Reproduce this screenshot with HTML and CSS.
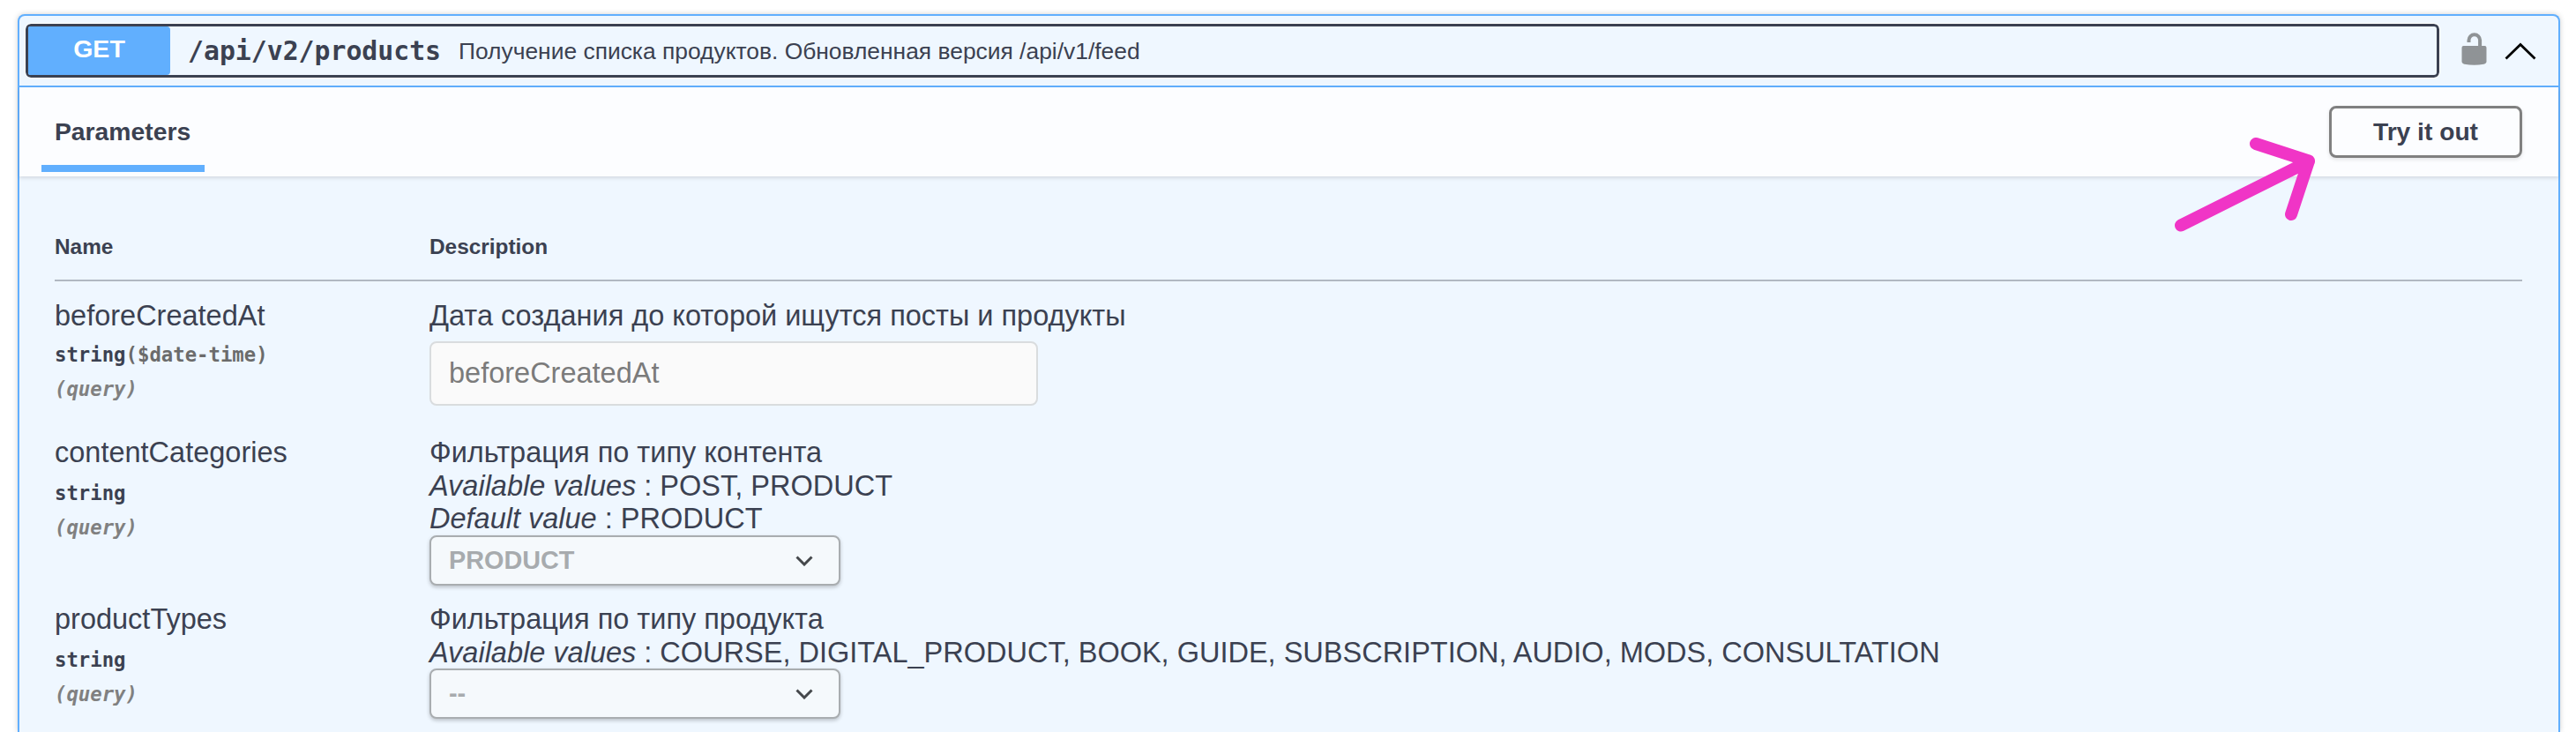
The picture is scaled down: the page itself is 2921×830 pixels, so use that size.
FILE: index.html
```html
<!DOCTYPE html>
<html lang="ru">

<head>
    <meta charset="UTF-8">
    <meta name="viewport" content="width=device-width, initial-scale=1.0">
    <title>GET /api/v2/products</title>
    <link rel="stylesheet" href="styles.css">
</head>

<body>
    <div class="opblock">
        <div class="summary">
            <button class="summary-control">
                <span class="method">GET</span>
                <span class="path">/api/v2/products</span>
                <span class="summary-text">Получение списка продуктов. Обновленная версия /api/v1/feed</span>
            </button>
            <svg class="lock" viewBox="0 0 29 37">
                <path d="M8.500 11V8.500a6.300 6.300 0 0 1 12.600 0V17" fill="none" stroke="#8f9396" stroke-width="4"/>
                <path d="M2.500 15h24q2 0 2 2v15.500q0 2.500-3 3.200q-11 2-22 0q-3-.7-3-3.200V17q0-2 2-2z" fill="#8f9396"/>
            </svg>
            <svg class="arrow-up" viewBox="0 0 36 20">
                <path d="M1.500 18.500L18 2.500l16.500 16" fill="none" stroke="#000" stroke-width="2.800"/>
            </svg>
        </div>

        <div class="section-header">
            <h4 class="tab">Parameters</h4>
            <button class="try-out">Try it out</button>
        </div>

        <div class="parameters">
            <div class="row head">
                <div>Name</div>
                <div>Description</div>
            </div>
            <div class="row first">
                <div>
                    <div class="name">beforeCreatedAt</div>
                    <div class="type">string<span class="format">($date-time)</span></div>
                    <div class="in">(query)</div>
                </div>
                <div>
                    <p>Дата создания до которой ищутся посты и продукты</p>
                    <input type="text" placeholder="beforeCreatedAt" disabled>
                </div>
            </div>
            <div class="row second">
                <div>
                    <div class="name">contentCategories</div>
                    <div class="type">string</div>
                    <div class="in">(query)</div>
                </div>
                <div>
                    <p>Фильтрация по типу контента</p>
                    <p><i>Available values</i> : POST, PRODUCT</p>
                    <p><i>Default value</i> : PRODUCT</p>
                    <div class="select">
                        <span>PRODUCT</span>
                        <svg viewBox="0 0 20 12"><path d="M1.500 1.500l8.500 8.500 8.500-8.500" fill="none" stroke="#45484b" stroke-width="3"/></svg>
                    </div>
                </div>
            </div>
            <div class="row">
                <div>
                    <div class="name">productTypes</div>
                    <div class="type">string</div>
                    <div class="in">(query)</div>
                </div>
                <div>
                    <p>Фильтрация по типу продукта</p>
                    <p><i>Available values</i> : COURSE, DIGITAL_PRODUCT, BOOK, GUIDE, SUBSCRIPTION, AUDIO, MODS, CONSULTATION</p>
                    <div class="select">
                        <span>--</span>
                        <svg viewBox="0 0 20 12"><path d="M1.500 1.500l8.500 8.500 8.500-8.500" fill="none" stroke="#45484b" stroke-width="3"/></svg>
                    </div>
                </div>
            </div>
        </div>
    </div>

    <!-- pointer to the button -->
    <svg class="pointer" viewBox="0 0 160 108">
        <path d="M7 99.500L152 27M92 7l60 19.500L132 87" fill="none" stroke="#f035c6" stroke-width="14" stroke-linecap="round" stroke-linejoin="round"/>
    </svg>
</body>
</html>
```
FILE: styles.css
```css
* {
    box-sizing: border-box;
}

body {
    margin: 0;
    padding: 16px 18px 0 20px;
    height: 830px;
    background: #fff;
    color: #3b4151;
    font-family: "Liberation Sans", Arial, sans-serif;
}

.opblock {
    height: 814px;
    border: 2px solid #61affe;
    border-bottom: 0;
    border-radius: 8px 8px 0 0;
    background: #eff7ff;
    box-shadow: 0 0 6px rgba(0, 0, 0, 0.19);
}

.summary {
    display: flex;
    align-items: center;
    height: 81px;
    padding: 0 25px 0 7px;
    border-bottom: 2px solid #61affe;
}

.summary-control {
    display: flex;
    align-items: center;
    width: 2738px;
    height: 61px;
    padding: 0;
    border: 3px solid #3b4151;
    border-radius: 6px;
    outline: 1px solid #fff;
    background: none;
    color: #3b4151;
    font-family: inherit;
}

.method {
    width: 161px;
    height: 55px;
    border-radius: 2px 4px 4px 2px;
    background: #61affe;
    color: #fff;
    font-size: 28.5px;
    font-weight: bold;
    line-height: 51px;
    text-align: center;
}

.path {
    margin-left: 20px;
    font-family: "DejaVu Sans Mono", monospace;
    font-size: 29.8px;
    font-weight: bold;
}

.summary-text {
    margin-left: 20px;
    padding-top: 1px;
    font-size: 26.4px;
}

.lock {
    width: 29px;
    height: 37px;
    margin-left: 25px;
    margin-bottom: 5px;
}

.arrow-up {
    width: 36px;
    height: 20px;
    margin-left: 20px;
}

.section-header {
    display: flex;
    align-items: center;
    justify-content: space-between;
    height: 101px;
    padding: 0 41px 0 25px;
    background: #fcfdff;
    box-shadow: 0 2px 4px rgba(0, 0, 0, 0.12);
}

.tab {
    align-self: flex-end;
    width: 185px;
    height: 74px;
    margin: 0 0 5px;
    padding-left: 15px;
    border-bottom: 8px solid #61affe;
    font-size: 28.3px;
    line-height: 56px;
}

.try-out {
    width: 219px;
    height: 59px;
    border: 3px solid #808080;
    border-radius: 8px;
    background: none;
    box-shadow: 0 2px 4px rgba(0, 0, 0, 0.1);
    color: #3b4151;
    font: bold 28.2px "Liberation Sans", Arial, sans-serif;
}

.parameters {
    padding: 41px 41px 0 40px;
}

.row {
    display: grid;
    grid-template-columns: 425px 1fr;
    padding-top: 21px;
    font-size: 32.5px;
    line-height: 37.5px;
}

.row.head {
    height: 78px;
    padding-top: 20px;
    border-bottom: 2px solid #b1b8c2;
    font-size: 24.4px;
    font-weight: bold;
}

.row.first {
    height: 155px;
}

.row.second {
    height: 189px;
}

.row p {
    margin: 0;
}

.type,
.in {
    font-family: "DejaVu Sans Mono", monospace;
    font-size: 22.3px;
    font-weight: bold;
    line-height: 39px;
}

.type {
    margin-top: 7px;
}

.first .type {
    margin-top: 5px;
}

.format {
    color: #6b6b6b;
}

.in {
    color: #808080;
    font-style: italic;
}

input {
    display: block;
    width: 690px;
    height: 73px;
    margin-top: 9px;
    padding: 0 20px;
    border: 2px solid #d9dcde;
    border-radius: 8px;
    background: #fafafa;
    font: 32.5px "Liberation Sans", Arial, sans-serif;
}

input::placeholder {
    color: #7b7b7b;
}

.select {
    display: flex;
    align-items: center;
    justify-content: space-between;
    width: 466px;
    height: 57px;
    margin-top: -1px;
    padding: 1px 29px 0 20px;
    border: 2px solid #a9adb0;
    border-radius: 8px;
    background: #f5f9fc;
    box-shadow: 0 2px 4px rgba(0, 0, 0, 0.22);
    color: #a7abae;
    font-size: 28.8px;
    font-weight: bold;
}

.select svg {
    width: 20px;
    height: 12px;
}

.pointer {
    position: absolute;
    left: 2466px;
    top: 156px;
    width: 160px;
    height: 108px;
}
```
